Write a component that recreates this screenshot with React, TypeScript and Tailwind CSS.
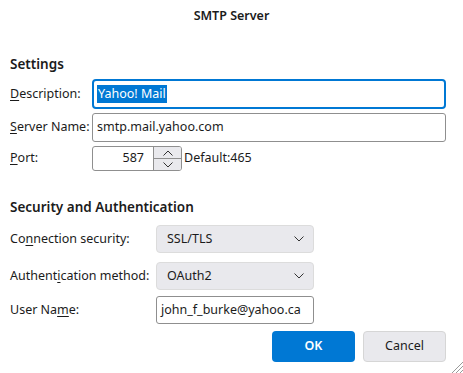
import React from "react";

const Chevron = ({ up = false, className = "" }: { up?: boolean; className?: string }) => (
  <svg width="10" height="6" viewBox="0 0 10 6" className={className}>
    <path
      d={up ? "M0.5 5.5 L5 1 L9.5 5.5" : "M0.5 0.5 L5 5 L9.5 0.5"}
      fill="none"
      stroke="#333"
      strokeWidth="1"
    />
  </svg>
);

const U = ({ children }: { children: React.ReactNode }) => <span className="underline underline-offset-2">{children}</span>;

export default function App() {
  return (
    <div
      className="relative w-[463px] h-[373px] bg-white text-[#1b1b1b] text-[12.5px] overflow-hidden whitespace-nowrap"
      style={{ fontFamily: '"Noto Sans", "Open Sans", sans-serif' }}
    >
      <div className="h-[32px] flex items-center justify-center font-semibold text-[12.5px]">SMTP Server</div>

      <div className="px-[10px] pr-[17px]">
        <div className="mt-[21px] h-[22px] leading-[22px] text-[13.5px] font-semibold">Settings</div>

        <div className="mt-[4px] flex flex-col gap-[4px]">
          <div className="flex items-center h-[30px]">
            <div className="w-[82px]"><U>D</U>escription:</div>
            <div className="flex-1 h-[30px] rounded-[4px] border-2 border-[#0078d4] flex items-center px-[3px]">
              <span className="bg-[#0078d4] text-white leading-[18px] px-[1px]">Yahoo! Mail</span>
            </div>
          </div>
          <div className="flex items-center h-[29px]">
            <div className="w-[82px]"><U>S</U>erver Name:</div>
            <div className="flex-1 h-[29px] rounded-[3px] border border-[#8f8f8f] flex items-center px-[4px]">smtp.mail.yahoo.com</div>
          </div>
          <div className="flex items-center h-[25px]">
            <div className="w-[82px]"><U>P</U>ort:</div>
            <div className="w-[90px] h-[25px] rounded-[3px] border border-[#8f8f8f] flex overflow-hidden">
              <div className="flex-1 flex items-center justify-end pr-[9px]">587</div>
              <div className="w-[28px] flex flex-col border-l border-[#8f8f8f]">
                <div className="flex-1 bg-[#e9e9ed] flex items-center justify-center border-b border-[#8f8f8f]"><Chevron up /></div>
                <div className="flex-1 bg-[#e9e9ed] flex items-center justify-center"><Chevron /></div>
              </div>
            </div>
            <div className="ml-[2px]">Default:465</div>
          </div>
        </div>

        <div className="mt-[25px] h-[22px] leading-[22px] text-[13.5px] font-semibold">Security and Authentication</div>

        <div className="mt-[7px] flex flex-col gap-[9px]">
          <div className="flex items-center h-[28px]">
            <div className="w-[146px]">Co<U>n</U>nection security:</div>
            <div className="w-[158px] h-[28px] rounded-[4px] bg-[#e9e9ed] border border-[#dcdcdc] flex items-center justify-between pl-[10px] pr-[9px]">
              <span>SSL/TLS</span>
              <Chevron />
            </div>
          </div>
          <div className="flex items-center h-[28px]">
            <div className="w-[146px]">Authent<U>i</U>cation method:</div>
            <div className="w-[158px] h-[28px] rounded-[4px] bg-[#e9e9ed] border border-[#dcdcdc] flex items-center justify-between pl-[10px] pr-[9px]">
              <span>OAuth2</span>
              <Chevron />
            </div>
          </div>
        </div>
        <div className="mt-[6px] flex items-center h-[28px]">
          <div className="w-[146px]">User Na<U>m</U>e:</div>
          <div className="w-[158px] h-[28px] rounded-[3px] border border-[#8f8f8f] flex items-center px-[4px]">john_f_burke@yahoo.ca</div>
        </div>

        <div className="mt-[7px] flex justify-end gap-[8px]">
          <button className="w-[83px] h-[31px] rounded-[4px] bg-[#0078d4] text-white font-semibold">OK</button>
          <button className="w-[83px] h-[31px] rounded-[4px] bg-[#e9e9ed] border border-[#d6d6d6]">Cancel</button>
        </div>
      </div>

      <svg className="absolute right-0 bottom-0" width="12" height="12" viewBox="0 0 12 12">
        <path d="M12 1 L1 12 M12 5 L5 12 M12 9 L9 12" stroke="#9a9a9a" strokeWidth="1" />
      </svg>
    </div>
  );
}
